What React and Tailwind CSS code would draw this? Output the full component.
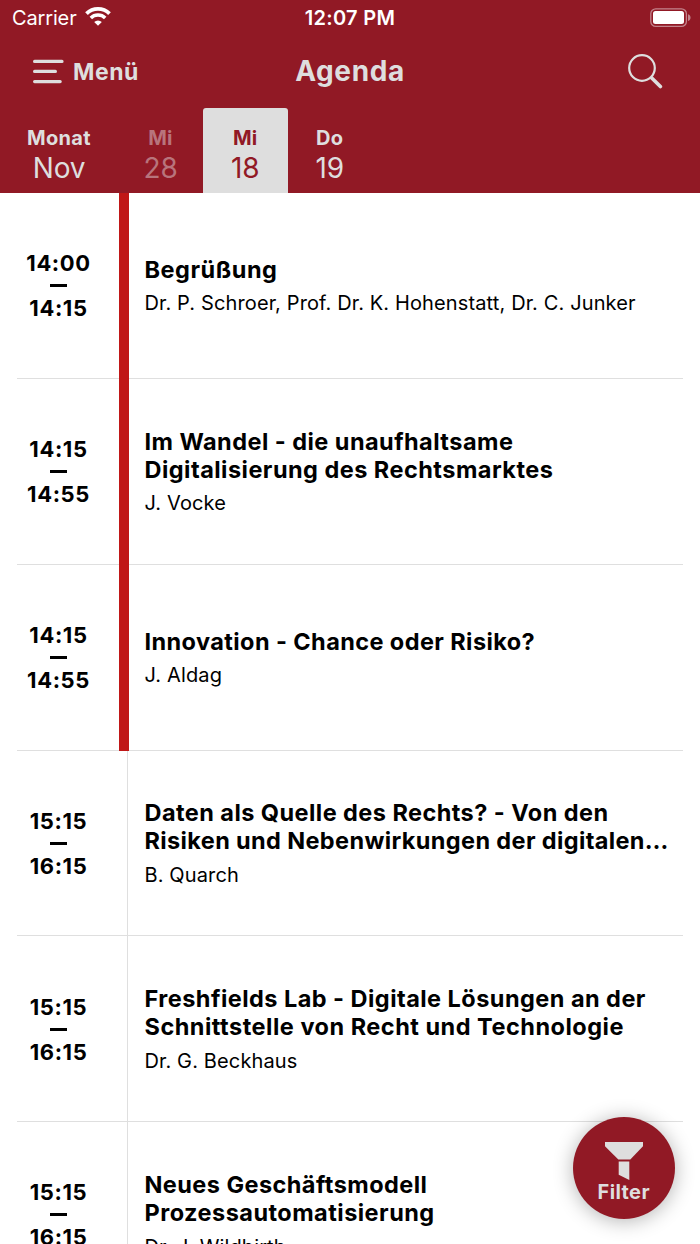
const sessions = [
  { from: '14:00', to: '14:15', active: true, title: [['Begrüßung', 'tracking-[0.53px]']], people: 'Dr. P. Schroer, Prof. Dr. K. Hohenstatt, Dr. C. Junker' },
  { from: '14:15', to: '14:55', active: true, title: [['Im Wandel - die unaufhaltsame', 'tracking-[0.46px]'], ['Digitalisierung des Rechtsmarktes', 'tracking-[0.47px]']], people: 'J. Vocke' },
  { from: '14:15', to: '14:55', active: true, title: [['Innovation - Chance oder Risiko?', 'tracking-[0.41px]']], people: 'J. Aldag' },
  { from: '15:15', to: '16:15', title: [['Daten als Quelle des Rechts? - Von den', 'tracking-[0.44px]'], ['Risiken und Nebenwirkungen der digitalen…', 'tracking-[0.37px]']], people: 'B. Quarch' },
  { from: '15:15', to: '16:15', title: [['Freshfields Lab - Digitale Lösungen an der', 'tracking-[0.46px]'], ['Schnittstelle von Recht und Technologie', 'tracking-[0.5px]']], people: 'Dr. G. Beckhaus' },
  { from: '15:15', to: '16:15', title: [['Neues Geschäftsmodell', 'tracking-[0.44px]'], ['Prozessautomatisierung', 'tracking-[0.47px]']], people: 'Dr. J. Wildbirth' },
];

function StatusBar() {
  return (
    <div className="grid h-9 grid-cols-3 items-center pl-3 pr-[9px] text-[20px] leading-6 text-white">
      <div className="flex items-center gap-[8px]">
        <span className="tracking-[-0.15px]">Carrier</span>
        <svg width="26" height="19" viewBox="0 0 26 19" className="-mt-[3px]" fill="none" stroke="white">
          <path d="M1.5 6.7a16.3 16.3 0 0 1 23 0" strokeWidth="3.8" />
          <path d="M5.8 11a10.2 10.2 0 0 1 14.4 0" strokeWidth="3.5" />
          <path d="M9.2 15.1a5.4 5.4 0 0 1 7.6 0L13 18.8z" fill="white" stroke="none" />
        </svg>
      </div>
      <span className="-ml-[3px] text-center font-semibold whitespace-nowrap tracking-[0.3px]">12:07 PM</span>
      <svg className="-mt-px justify-self-end" width="41" height="20" viewBox="0 0 41 20">
        <rect x="0.8" y="0.8" width="35.6" height="17.6" rx="5" fill="none" stroke="#c3848c" strokeWidth="1.3" />
        <rect x="3" y="3" width="31" height="13" rx="2.5" fill="white" />
        <path d="M38 6.3c3.4 1 3.4 5.8 0 6.8z" fill="#c3848c" />
      </svg>
    </div>
  );
}

function NavBar() {
  return (
    <div className="grid h-[71px] grid-cols-3 items-center pl-[33px] pr-[37px] text-[#dedede]">
      <div className="flex items-center gap-[9px]">
        <svg className="-mt-px" width="31" height="25" viewBox="0 0 31 25" stroke="currentColor" strokeWidth="3.2" strokeLinecap="round">
          <path d="M1.6 2.4h27.4M1.6 12.4h20.8M1.6 22.6h25.6" />
        </svg>
        <span className="text-[23px] leading-7 font-bold tracking-[0.5px]">Menü</span>
      </div>
      <h1 className="-mt-px ml-1 text-center text-[28px] leading-8 font-bold tracking-[0.6px]">Agenda</h1>
      <svg className="-mt-px justify-self-end" width="36" height="36" viewBox="0 0 36 36" fill="none" stroke="currentColor" strokeLinecap="round">
        <circle cx="15" cy="15" r="12.8" strokeWidth="2.2" />
        <path d="M25 25.2l8.4 8.4" strokeWidth="3.6" />
      </svg>
    </div>
  );
}

function Tab({ top, bottom, className }) {
  return (
    <button className={`flex flex-col items-center pt-[17.5px] ${className}`}>
      <span className="text-[20px] leading-6 font-bold tracking-[0.3px]">{top}</span>
      <span className="mt-[2px] text-[28px] leading-8 font-normal tracking-[-0.2px]">{bottom}</span>
    </button>
  );
}

function Session({ item }) {
  return (
    <article className="mx-[17px] flex h-[185.85px] shrink-0 border-b border-[#dfdfdf]">
      <div className="flex w-[83px] flex-col items-center justify-center pt-[0.5px] text-[22px] leading-6 font-bold tracking-[0.6px]">
        <span>{item.from}</span>
        <span className="mt-[9px] mb-[9px] h-[3px] w-[17px] bg-black" />
        <span>{item.to}</span>
      </div>
      <div className={item.active ? 'ml-[18.5px] -mb-px w-[10px] bg-[#c01717]' : 'ml-[26.5px] mr-px w-px bg-[#dfdfdf]'} />
      <div className="ml-[16px] flex flex-col justify-center pb-[0.5px] whitespace-nowrap">
        <h2 className="text-[23.5px] leading-7 font-bold">
          {item.title.map(([line, tracking]) => (
            <span key={line} className={`block w-max ${tracking}`}>{line}</span>
          ))}
        </h2>
        <p className="mt-[8.5px] w-max text-[20px] leading-[22px] tracking-[0.13px]">{item.people}</p>
      </div>
    </article>
  );
}

export default function App() {
  return (
    <div className="relative flex h-[1244px] w-[700px] flex-col overflow-hidden bg-white font-['Inter',sans-serif] text-black">
      <header className="h-[193px] shrink-0 bg-[#911925]">
        <StatusBar />
        <NavBar />
        <div className="mt-[1.4px] flex h-[84.6px] text-[#dedede]">
          <Tab top="Monat" bottom="Nov" className="w-[118px]" />
          <Tab top="Mi" bottom="28" className="w-[85px] text-[#b8747c]" />
          <Tab top="Mi" bottom="18" className="w-[84.5px] rounded-t-[3px] bg-[#dedede] text-[#911925]" />
          <Tab top="Do" bottom="19" className="w-[84.5px]" />
        </div>
      </header>
      <main className="flex flex-col">
        {sessions.map((item, i) => <Session key={i} item={item} />)}
      </main>
      <button className="absolute top-[1117px] left-[573px] flex h-[101.5px] w-[101.5px] flex-col items-center rounded-full bg-[#911925] pt-[25px] text-[#dedede] shadow-[0_2px_20px_rgba(0,0,0,0.3)]">
        <svg width="38" height="38" viewBox="0 0 38 38" fill="currentColor">
          <path d="M0 0h38v4.3L25.3 17.5H13.3L0 4.3z" />
          <path d="M13.7 19.5h10.6V38l-10.6-5.2z" />
        </svg>
        <span className="text-[20px] leading-6 font-bold tracking-[0.4px]">Filter</span>
      </button>
    </div>
  );
}
